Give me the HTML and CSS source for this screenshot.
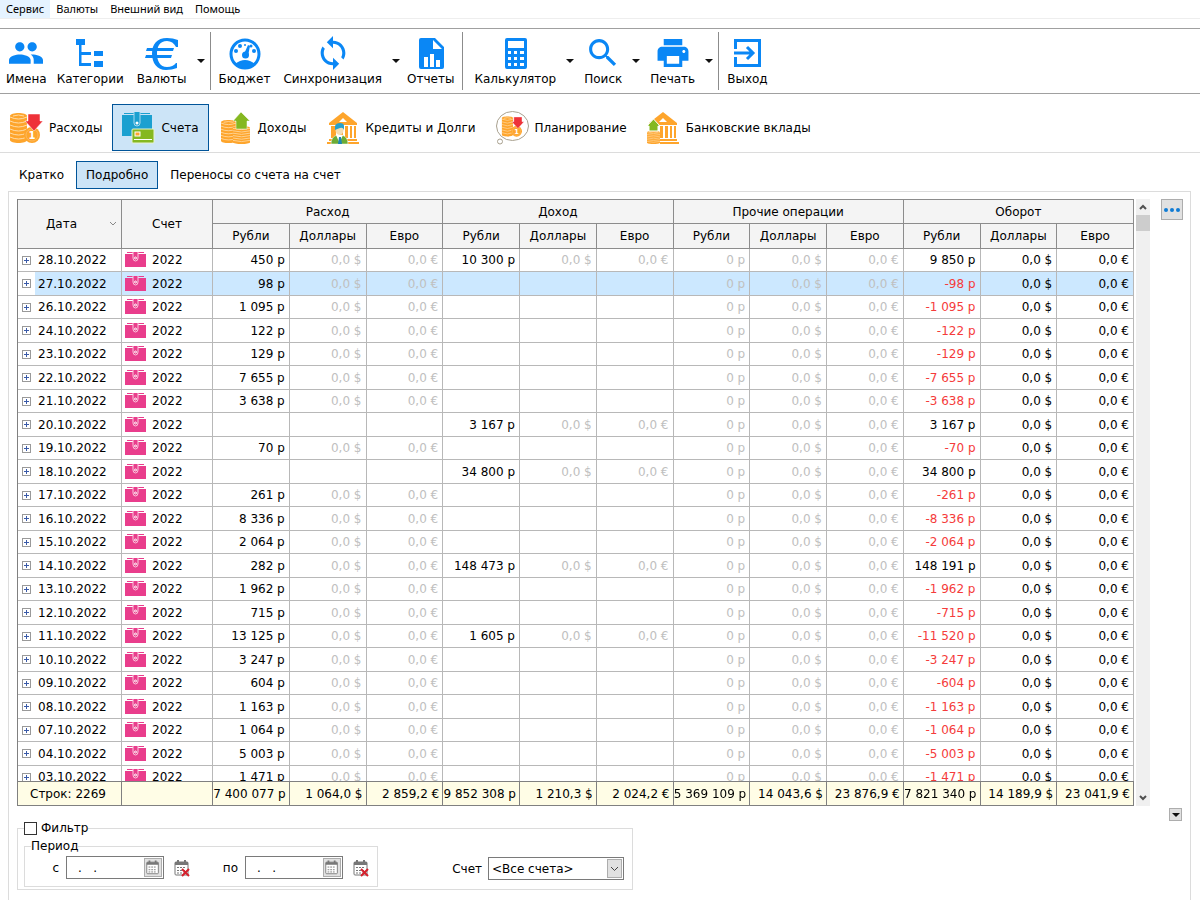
FILE: index.html
```html
<!DOCTYPE html>
<html lang="ru">
<head>
  <meta charset="UTF-8" />
  <meta name="viewport" content="width=device-width, initial-scale=1.0" />
  <title>Счета</title>
  <link rel="stylesheet" href="styles.css">
</head>
<body>

  <!-- shared icon parts -->
  <svg class="defs" aria-hidden="true">
    <symbol id="stack" viewBox="0 0 17 30" preserveAspectRatio="none">
      <path fill="#fea52c" d="M0 3C0-1 17-1 17 3V27C17 31 0 31 0 27Z"/>
      <path fill="none" stroke="#ffdca8" stroke-width="1" d="M0 4Q8.500 8 17 4M0 8Q8.500 12 17 8M0 12Q8.500 16 17 12M0 16Q8.500 20 17 16M0 20Q8.500 24 17 20M0 24Q8.500 28 17 24M3 3Q8.500 1 14 3"/>
    </symbol>
    <symbol id="expense" viewBox="0 0 34 34">
      <use href="#stack" x="1" y="2" width="17" height="30"/>
      <circle cx="23" cy="24" r="8" fill="#fea52c"/>
      <circle cx="23" cy="24" r="6" fill="none" stroke="#fdb95a"/>
      <text x="23" y="28" text-anchor="middle" font-size="10" font-weight="bold" fill="#fff">1</text>
      <path fill="#ee3239" stroke="#fff" stroke-width=".5" d="M19 3H31V10H34L25 20L16 10H19Z"/>
    </symbol>
    <symbol id="bank" viewBox="0 0 34 34">
      <path fill="#fea52c" d="M17 1L31 12V14H3V12ZM17 7L13 11H21ZM5 15H10V27H5ZM14 15H17V27H14ZM19 15H22V27H19ZM24 15H26V27H24ZM28 15H30V27H28ZM3 28H31V30H3ZM1 31H33V33H1Z" fill-rule="evenodd"/>
    </symbol>
    <symbol id="calendar" viewBox="0 0 18 18">
      <rect x="2" y="3" width="13" height="13" rx="1" fill="#fff" stroke="#777"/>
      <path fill="#777" d="M2 3H15V6H2ZM4 1H6V4H4ZM11 1H13V4H11Z"/>
      <path fill="none" stroke="#777" stroke-dasharray="2 1" d="M4 8.500H13M4 11.500H13M4 14H13"/>
    </symbol>
    <symbol id="wallet" viewBox="0 0 21 16">
      <path fill="#e93d8c" d="M2 0H8V1H2ZM13 0H19V1H13ZM0 2H21V15H0Z"/>
      <path fill="#e93d8c" stroke="#fbc8de" d="M8 0V6Q8 9 10.500 9T13 6V0"/>
      <circle cx="10.500" cy="6" r="1" fill="none" stroke="#fff"/>
    </symbol>
  </svg>

  <nav class="menu">
    <a href="#" class="current">Сервис</a>
    <a href="#">Валюты</a>
    <a href="#">Внешний вид</a>
    <a href="#">Помощь</a>
  </nav>

  <div class="toolbar">
    <button class="tool">
      <svg viewBox="1 1 22 22"><path d="M16 11c1.660 0 2.990-1.340 2.990-3S17.660 5 16 5c-1.660 0-3 1.340-3 3s1.340 3 3 3zm-8 0c1.660 0 2.990-1.340 2.990-3S9.660 5 8 5C6.340 5 5 6.340 5 8s1.340 3 3 3zm0 2c-2.330 0-7 1.170-7 3.500V19h14v-2.500c0-2.330-4.670-3.500-7-3.500zm8 0c-.29 0-.62.02-.97.05 1.160.84 1.970 1.970 1.970 3.450V19h6v-2.500c0-2.330-4.670-3.500-7-3.500z"/></svg>
      Имена
    </button>
    <button class="tool">
      <svg viewBox="0 0 34 34"><path d="M3 3H12V9H3ZM6 9H8.500V16H18V19H8.500V27H18V30H6ZM21 15H30V20H21ZM21 25H30V31H21Z"/></svg>
      Категории
    </button>
    <button class="tool split">
      <svg viewBox="0 0 34 34"><path d="M33 4V11H31Q28 5 22 5C15 5 12 10 12 17.500S15 31 22 31Q28 31 31 27H32V32Q27 34 21 34C12 34 7 27 7 17.500S12 2 22 2Q28 2 33 4Z"/><path d="M2 12H29L28 15H1ZM1 19H27L26 22H0Z"/></svg>
      Валюты
    </button>
    <button class="more" aria-label="Валюты: меню"></button>
    <span class="sep"></span>
    <button class="tool">
      <svg viewBox="0 0 34 34"><circle class="line" cx="18" cy="18" r="14" stroke-width="3"/><path d="M8 28Q18 20 28 28Q18 36 8 28ZM17 18L21 9L23 10L21 20Z"/><circle cx="18.500" cy="19" r="3.500"/><circle cx="9" cy="15" r="2"/><circle cx="13" cy="10" r="2"/><circle cx="18" cy="9" r="1"/><circle cx="24" cy="10" r="1.500"/><circle cx="27" cy="15" r="2"/></svg>
      Бюджет
    </button>
    <button class="tool split">
      <svg viewBox="1 1 22 22"><path d="M12 4V1L8 5l4 4V6c3.310 0 6 2.690 6 6 0 1.010-.25 1.970-.7 2.800l1.460 1.460C19.540 15.030 20 13.570 20 12c0-4.420-3.580-8-8-8zm0 14c-3.310 0-6-2.690-6-6 0-1.010.25-1.970.7-2.800L5.240 7.740C4.460 8.970 4 10.430 4 12c0 4.420 3.580 8 8 8v3l4-4-4-4v3z"/></svg>
      Синхронизация
    </button>
    <button class="more" aria-label="Синхронизация: меню"></button>
    <button class="tool">
      <svg viewBox="0 0 34 34"><path fill-rule="evenodd" d="M7 2H21L30 11V31Q30 33 28 33H7Q5 33 5 31V4Q5 2 7 2ZM19 4V13H28ZM10 21V31H14V21ZM16 18V31H20V18ZM22 24V31H26V24Z"/></svg>
      Отчеты
    </button>
    <span class="sep"></span>
    <button class="tool split">
      <svg viewBox="0 0 34 34"><path fill-rule="evenodd" d="M9 2H27Q29 2 29 4V31Q29 33 27 33H9Q7 33 7 31V4Q7 2 9 2ZM10 5V12H26V5ZM10 15V18H13V15ZM16 15V18H19V15ZM22 15V18H26V15ZM10 21V24H13V21ZM16 21V24H19V21ZM22 21V24H26V21ZM10 27V30H13V27ZM16 27V30H19V27ZM22 27V30H26V27Z"/></svg>
      Калькулятор
    </button>
    <button class="more" aria-label="Калькулятор: меню"></button>
    <button class="tool split">
      <svg viewBox="1 1 22 22"><path d="M15.500 14h-.79l-.28-.27C15.410 12.590 16 11.110 16 9.500 16 5.910 13.090 3 9.500 3S3 5.910 3 9.500 5.910 16 9.500 16c1.610 0 3.090-.59 4.230-1.570l.27.28v.79l5 4.990L20.490 19l-4.990-5zm-6 0C7.010 14 5 11.990 5 9.500S7.010 5 9.500 5 14 7.010 14 9.500 11.990 14 9.500 14z"/></svg>
      Поиск
    </button>
    <button class="more" aria-label="Поиск: меню"></button>
    <button class="tool split">
      <svg viewBox="1 1 22 22"><path d="M19 8H5c-1.660 0-3 1.340-3 3v6h4v4h12v-4h4v-6c0-1.660-1.340-3-3-3zm-3 11H8v-5h8v5zm3-7c-.55 0-1-.45-1-1s.45-1 1-1 1 .45 1 1-.45 1-1 1zm-1-9H6v4h12V3z"/></svg>
      Печать
    </button>
    <button class="more" aria-label="Печать: меню"></button>
    <span class="sep"></span>
    <button class="tool">
      <svg viewBox="0 0 34 34"><path class="line" stroke-width="3" d="M5.500 13V4.500H29.500V29.500H5.500V21M4 17H22M17 11L23 17L17 23"/></svg>
      Выход
    </button>
  </div>

  <div class="sections">
    <button class="section"><svg><use href="#expense"/></svg>Расходы</button>
    <button class="section on">
      <svg viewBox="0 0 34 34">
        <path fill="#1ba0d0" d="M3 2H13V3H3ZM19 2H29V3H19ZM1 4H31V25H1Z"/>
        <path fill="#1ba0d0" stroke="#a9d8ee" d="M13 1V12Q13 15 16 15T19 12V1"/>
        <circle cx="16" cy="12" r="1.500" fill="#fff"/>
        <rect x="11" y="18" width="22" height="14" rx="1" fill="#85b821" stroke="#e8f3d0"/>
        <rect x="14" y="21" width="5" height="4" fill="#fea52c" stroke="#fff"/>
        <path stroke="#fff" d="M13 28.500H31"/>
      </svg>
      Счета
    </button>
    <button class="section">
      <svg viewBox="0 0 34 34">
        <use href="#stack" x="3" y="9" width="15" height="23"/>
        <use href="#stack" x="15" y="15" width="17" height="18"/>
        <path fill="#85b821" stroke="#fff" stroke-width=".5" d="M18 18V10H15L23 1L32 10H29V18Z"/>
      </svg>
      Доходы
    </button>
    <button class="section">
      <svg viewBox="0 0 34 34">
        <use href="#bank"/>
        <path fill="#6cac36" stroke="#fff" stroke-width=".5" d="M5 33Q5 26 11 24H16Q22 26 22 33Z"/>
        <path fill="#fff" d="M10 24H17L13.500 32Z"/>
        <path fill="#1b87b8" d="M13 26H15L16 33H12Z"/>
        <ellipse cx="13.500" cy="19" rx="4" ry="5" fill="#f3ddb5"/>
        <path fill="#28a0cc" d="M9 19V15Q10 12 14 12T18 15V19Q17 16 14 17T9 19Z"/>
      </svg>
      Кредиты и Долги
    </button>
    <button class="section">
      <svg viewBox="0 0 34 34">
        <ellipse cx="17.500" cy="15" rx="16" ry="14.500" fill="#fff" stroke="#a9a18f"/>
        <circle cx="5" cy="30.500" r="2.500" fill="#fff" stroke="#a9a18f"/>
        <use href="#expense" x="6" y="4" width="23" height="23"/>
      </svg>
      Планирование
    </button>
    <button class="section">
      <svg viewBox="0 0 34 34">
        <use href="#bank"/>
        <path fill="#fff" d="M0 15H14V34H0Z"/>
        <use href="#stack" x="1" y="20" width="13" height="13"/>
        <path fill="#85b821" stroke="#fff" d="M3 20V15H1L7.500 8L14 15H12V20Z"/>
      </svg>
      Банковские вклады
    </button>
  </div>

  <div class="views">
    <button class="view">Кратко</button>
    <button class="view on">Подробно</button>
    <button class="view">Переносы со счета на счет</button>
  </div>

  <main class="panel">
    <div class="grid-row">
      <div class="grid-scroll">
        <table class="grid">
          <colgroup>
            <col class="col-date"><col class="col-account"><col span="12">
          </colgroup>
          <thead>
            <tr>
              <th rowspan="2"><span class="sorted">Дата <svg viewBox="0 0 8 6"><path d="M1 1L4 4L7 1"/></svg></span></th>
              <th rowspan="2">Счет</th>
              <th colspan="3">Расход</th>
              <th colspan="3">Доход</th>
              <th colspan="3">Прочие операции</th>
              <th colspan="3">Оборот</th>
            </tr>
            <tr>
              <th>Рубли</th><th>Доллары</th><th>Евро</th>
              <th>Рубли</th><th>Доллары</th><th>Евро</th>
              <th>Рубли</th><th>Доллары</th><th>Евро</th>
              <th>Рубли</th><th>Доллары</th><th>Евро</th>
            </tr>
          </thead>
          <tbody id="rows"></tbody>
          <tfoot>
            <tr>
              <td class="count">Строк: 2269</td><td></td>
              <td>7 400 077 р</td><td>1 064,0 $</td><td>2 859,2 €</td>
              <td>9 852 308 р</td><td>1 210,3 $</td><td>2 024,2 €</td>
              <td>5 369 109 р</td><td>14 043,6 $</td><td>23 876,9 €</td>
              <td>7 821 340 р</td><td>14 189,9 $</td><td>23 041,9 €</td>
            </tr>
          </tfoot>
        </table>
      </div>
      <div class="scrollbar">
        <svg viewBox="0 0 14 14"><path d="M4 9L7 6L10 9"/></svg>
        <span class="thumb"></span>
        <svg class="down" viewBox="0 0 14 14"><path d="M4 5L7 8L10 5"/></svg>
      </div>
      <button class="dots" aria-label="Настройки"><svg viewBox="0 0 18 6"><circle cx="3" cy="3" r="2"/><circle cx="9" cy="3" r="2"/><circle cx="15" cy="3" r="2"/></svg></button>
    </div>

    <div class="bottom">
      <fieldset class="filter">
        <legend><label><input type="checkbox"> Фильтр</label></legend>
        <div class="filter-row">
          <fieldset class="period">
            <legend>Период</legend>
            <div class="period-row">
              <label for="from">с</label>
              <span class="date-box">
                <input id="from" type="text" value=".   .">
                <button class="pick" aria-label="Выбрать дату"><svg><use href="#calendar"/></svg></button>
              </span>
              <button class="clear" aria-label="Очистить дату"><svg viewBox="0 0 18 18"><use href="#calendar"/><path stroke="#d5202c" stroke-width="2" d="M9 10L16 17M16 10L9 17"/></svg></button>
              <label for="to">по</label>
              <span class="date-box">
                <input id="to" type="text" value=".   .">
                <button class="pick" aria-label="Выбрать дату"><svg><use href="#calendar"/></svg></button>
              </span>
              <button class="clear" aria-label="Очистить дату"><svg viewBox="0 0 18 18"><use href="#calendar"/><path stroke="#d5202c" stroke-width="2" d="M9 10L16 17M16 10L9 17"/></svg></button>
            </div>
          </fieldset>
          <div class="account">
            <label for="account">Счет</label>
            <select id="account"><option>&lt;Все счета&gt;</option></select>
          </div>
        </div>
      </fieldset>
      <button class="fold" aria-label="Свернуть фильтр"></button>
    </div>
  </main>

  <script src="script.js"></script>
</body>
</html>
```
FILE: styles.css
```css
* {
  box-sizing: border-box;
}
body {
  margin: 0;
  height: 100vh;
  display: flex;
  flex-direction: column;
  overflow: hidden;
  background: #fff;
  color: #000;
  font-family: "DejaVu Sans", Verdana, sans-serif;
  font-size: 12px;
  line-height: 16px;
}
button, input, select {
  font: inherit;
  color: inherit;
  margin: 0;
}
button {
  padding: 0;
  border: 0;
  background: none;
  white-space: nowrap;
}
.defs {
  position: absolute;
  width: 0;
  height: 0;
}

/* menu */
.menu {
  display: flex;
  height: 19px;
  border-bottom: 1px solid #eee;
  font-family: "Noto Sans", sans-serif;
  font-size: 11px;
  line-height: 18px;
}
.menu a {
  padding: 0 6px;
  color: #000;
  text-decoration: none;
}
.menu .current {
  background: #e5f3ff;
}

/* toolbar */
.toolbar {
  display: flex;
  margin-top: 9px;
  padding: 3px 1px;
  height: 66px;
  border-top: 1px solid #a0a0a0;
  border-bottom: 1px solid #a0a0a0;
}
.tool {
  display: flex;
  flex-direction: column;
  align-items: center;
  gap: 1px;
  padding: 4px 5px 0;
}
.split {
  padding: 4px 8px 0;
}
.tool svg {
  width: 34px;
  height: 34px;
  fill: #0a87f5;
}
.tool .line {
  fill: none;
  stroke: #0a87f5;
}
.more {
  display: flex;
  align-items: center;
  justify-content: center;
  width: 12px;
}
.more::before, .fold::before {
  content: "";
  border: 4px solid transparent;
  border-top-color: #111;
  border-bottom: 0;
}
.sep {
  width: 1px;
  margin: 0 3px;
  background: #8c8c8c;
}

/* sections and views */
.sections {
  display: flex;
  padding: 10px 0 1px;
  border-bottom: 1px solid #dcdcdc;
}
.section {
  display: flex;
  align-items: center;
  gap: 6px;
  height: 47px;
  padding: 0 9px 0 8px;
  border: 1px solid transparent;
}
.section svg {
  width: 34px;
  height: 34px;
}
.views {
  display: flex;
  gap: 2px;
  padding: 8px 9px 2px;
}
.view {
  height: 28px;
  padding: 0 9px;
  border: 1px solid transparent;
}
.section.on, .view.on {
  background: #cce4f7;
  border-color: #005499;
}

/* panel */
.panel {
  flex: 1;
  min-height: 0;
  display: flex;
  flex-direction: column;
  margin: 0 9px 0 8px;
  padding: 7px 7px 10px 8px;
  border: 1px solid #dcdcdc;
  border-width: 1px 1px 0;
}
.grid-row {
  flex: 1;
  min-height: 0;
  display: flex;
}
.grid-scroll {
  flex: 1;
  overflow: hidden;
  border-bottom: 1px solid #808080;
}
.grid {
  width: 100%;
  table-layout: fixed;
  border-collapse: separate;
  border-spacing: 0;
  border-left: 1px solid #808080;
}
.col-date {
  width: 104px;
}
.col-account {
  width: 91px;
}
.grid th, .grid td {
  padding: 0 4px 0 0;
  border-right: 1px solid #b8b8b8;
  border-bottom: 1px solid #b8b8b8;
  text-align: right;
  white-space: nowrap;
}
.grid th {
  height: 25px;
  padding: 0;
  background: #f4f4f4;
  border-color: #8c8c8c;
  font-weight: normal;
  text-align: center;
}
.grid thead tr:first-child th {
  border-top: 1px solid #8c8c8c;
}
.sorted {
  display: flex;
  align-items: center;
  justify-content: flex-end;
  gap: 32px;
  padding-right: 4px;
}
.sorted svg {
  width: 8px;
  height: 6px;
  fill: none;
  stroke: #888;
}
.grid tbody td {
  height: 23px;
}
.grid tbody tr:nth-child(even) td {
  height: 24px;
}
.grid .cell {
  display: flex;
  align-items: center;
  gap: 6px;
  padding-left: 4px;
}
.grid .cell:has(.wallet) {
  padding-left: 3px;
}
.expand {
  width: 9px;
  height: 9px;
  margin-right: 1px;
  border: 1px solid #999;
  background:
    linear-gradient(#3a5aa8, #3a5aa8) center / 5px 1px no-repeat,
    linear-gradient(#3a5aa8, #3a5aa8) center / 1px 5px no-repeat,
    #fff;
}
.wallet {
  width: 21px;
  height: 16px;
}
.zero {
  color: #c0c0c0;
}
.minus {
  color: #f53b3b;
}
.selected td {
  background: #cce8ff;
}
.grid .selected td:first-child {
  background: linear-gradient(to right, #fff 17px, #cce8ff 17px);
}
.grid tfoot td {
  position: sticky;
  bottom: 0;
  height: 24px;
  padding: 0 3px 0 0;
  background: #fffde6;
  border-color: #808080;
  border-top: 1px solid #808080;
  border-bottom: 0;
}
.grid tfoot .count {
  text-align: center;
}

.scrollbar {
  display: flex;
  flex-direction: column;
  width: 14px;
  margin-left: 2px;
  background: #f0f0f0;
}
.scrollbar svg {
  width: 14px;
  height: 16px;
  fill: none;
  stroke: #505050;
  stroke-width: 2;
}
.scrollbar .down {
  margin-top: auto;
}
.thumb {
  height: 16px;
  background: #cdcdcd;
}
.dots {
  display: flex;
  align-items: center;
  justify-content: center;
  width: 22px;
  height: 21px;
  margin-left: 11px;
  border: 1px solid #adadad;
  background: #e1e1e1;
}
.dots svg {
  width: 18px;
  height: 6px;
  fill: #0f7bd4;
}

/* filter */
.bottom {
  display: flex;
  justify-content: space-between;
  align-items: flex-start;
  padding-top: 2px;
}
.fold {
  display: flex;
  align-items: center;
  justify-content: center;
  width: 13px;
  height: 13px;
  margin-right: 1px;
  border: 1px solid #adadad;
  background: #e1e1e1;
}
fieldset {
  margin: 0;
  min-width: 0;
  border: 1px solid #dcdcdc;
}
.filter {
  width: 616px;
  margin-top: 12px;
  padding: 0 6px 2px;
}
legend {
  padding: 0;
}
.filter legend label {
  display: flex;
  align-items: center;
  gap: 4px;
}
.filter input[type="checkbox"] {
  appearance: none;
  width: 13px;
  height: 13px;
  border: 1px solid #333;
  background: #fff;
}
.filter input[type="checkbox"]:checked {
  background: #0a87f5;
}
.filter-row {
  display: flex;
  justify-content: space-between;
  align-items: flex-end;
  padding-top: 2px;
}
.period {
  padding: 0 7px 7px 6px;
}
.period-row {
  display: flex;
  align-items: center;
  gap: 7px;
  padding-top: 2px;
}
.period-row label {
  width: 28px;
  text-align: right;
}
.period-row .clear + label {
  width: 40px;
}
.date-box {
  display: flex;
  align-items: center;
  width: 98px;
  height: 23px;
  padding: 1px;
  border: 1px solid #7a7a7a;
}
.date-box input {
  flex: 1;
  min-width: 0;
  height: 19px;
  padding: 0 0 0 10px;
  border: 0;
  outline: 0;
}
.pick {
  display: flex;
  width: 18px;
  height: 19px;
  border: 1px solid #adadad;
  background: #e1e1e1;
}
.pick svg {
  width: 16px;
  height: 17px;
}
.clear {
  display: flex;
  width: 18px;
  margin-left: 2px;
}
.clear svg {
  width: 18px;
  height: 18px;
}
.account {
  display: flex;
  align-items: center;
  gap: 6px;
  padding: 0 2px 7px;
}
.account select {
  appearance: none;
  width: 136px;
  height: 23px;
  padding: 0 20px 0 3px;
  border: 1px solid #7a7a7a;
  border-radius: 0;
  background: #fff url("data:image/svg+xml,%3Csvg xmlns='http://www.w3.org/2000/svg' width='15' height='19'%3E%3Crect x='.5' y='.5' width='14' height='18' fill='%23e1e1e1' stroke='%23adadad'/%3E%3Cpath d='M4 8l3.500 3.500L11 8' fill='none' stroke='%23444'/%3E%3C/svg%3E") right 1px center no-repeat;
}
```
FILE: script.js
```javascript
// дата, расход, доход, оборот (рубли)
const days = [
  ['28.10.2022', '450', '10 300', '9 850'],
  ['27.10.2022', '98', '', '-98'],
  ['26.10.2022', '1 095', '', '-1 095'],
  ['24.10.2022', '122', '', '-122'],
  ['23.10.2022', '129', '', '-129'],
  ['22.10.2022', '7 655', '', '-7 655'],
  ['21.10.2022', '3 638', '', '-3 638'],
  ['20.10.2022', '', '3 167', '3 167'],
  ['19.10.2022', '70', '', '-70'],
  ['18.10.2022', '', '34 800', '34 800'],
  ['17.10.2022', '261', '', '-261'],
  ['16.10.2022', '8 336', '', '-8 336'],
  ['15.10.2022', '2 064', '', '-2 064'],
  ['14.10.2022', '282', '148 473', '148 191'],
  ['13.10.2022', '1 962', '', '-1 962'],
  ['12.10.2022', '715', '', '-715'],
  ['11.10.2022', '13 125', '1 605', '-11 520'],
  ['10.10.2022', '3 247', '', '-3 247'],
  ['09.10.2022', '604', '', '-604'],
  ['08.10.2022', '1 163', '', '-1 163'],
  ['07.10.2022', '1 064', '', '-1 064'],
  ['04.10.2022', '5 003', '', '-5 003'],
  ['03.10.2022', '1 471', '', '-1 471'],
];

function group(sum) {
  if (!sum) return '<td></td><td></td><td></td>';
  const cls = sum === '0' ? ' class="zero"' : '';
  return `<td${cls}>${sum} р</td><td class="zero">0,0 $</td><td class="zero">0,0 €</td>`;
}

document.getElementById('rows').innerHTML = days.map(([date, out, inc, total]) => `
  <tr${date === '27.10.2022' ? ' class="selected"' : ''}>
    <td><span class="cell"><button class="expand" aria-label="Развернуть"></button>${date}</span></td>
    <td><span class="cell"><svg class="wallet"><use href="#wallet"/></svg>2022</span></td>
    ${group(out)}${group(inc)}${group('0')}
    <td${total[0] === '-' ? ' class="minus"' : ''}>${total} р</td><td>0,0 $</td><td>0,0 €</td>
  </tr>`).join('');
```
